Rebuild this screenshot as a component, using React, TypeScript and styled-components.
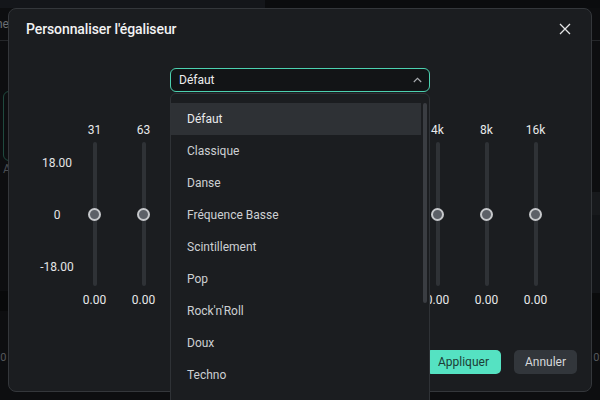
import React from "react";
import styled, { createGlobalStyle } from "styled-components";

const GlobalStyle = createGlobalStyle`
  html, body { margin: 0; padding: 0; background: #0d0e10; }
  body { font-family: Roboto, "Noto Sans", "Liberation Sans", sans-serif; }
  * { box-sizing: border-box; }
`;

const Page = styled.div`
  position: relative;
  width: 600px;
  height: 400px;
  overflow: hidden;
  background: #0d0e10;
  display: grid;
  grid-template-columns: 1fr;
`;

/* ---------- dimmed application behind the dialog ---------- */
const Backdrop = styled.div`
  display: grid;
  grid-template-rows: 8px 33px 50px 70px 130px 20px 89px;
`;
const TopStrip = styled.div`
  display: flex;
`;
const TopStripPart = styled.div<{ $w: number; $bg: string }>`
  width: ${(p) => p.$w}px;
  background: ${(p) => p.$bg};
`;
const TabsRow = styled.div`
  display: flex;
  align-items: center;
  border-bottom: 1px solid #25272a;
  color: #6b6e72;
  font-size: 12px;
  margin-left: -4px;
`;
const GhostCard = styled.div`
  margin-left: 3px;
  width: 60px;
  height: 70px;
  border: 1.5px solid #1f4a3e;
  border-radius: 6px;
`;
const GhostLabel = styled.div`
  margin-left: 3px;
  color: #4a4d52;
  font-size: 12px;
  height: 20px;
  line-height: 16px;
`;
const Spacer = styled.div``;
const DarkBand = styled.div`
  background: #08090a;
`;
const BottomRow = styled.div`
  display: flex;
  justify-content: space-between;
  align-items: flex-start;
  padding-top: 40px;
  color: #55585c;
  font-size: 11px;
  margin-left: -6px;
  margin-right: -2px;
`;
const RightBands = styled.div`
  position: absolute;
  right: 0;
  top: 192px;
  width: 10px;
  display: flex;
  flex-direction: column;
`;
const RightBand = styled.div<{ $h: number; $bg: string }>`
  height: ${(p) => p.$h}px;
  background: ${(p) => p.$bg};
`;

/* ---------- dialog ---------- */
const Dialog = styled.div`
  position: absolute;
  left: 8px;
  top: 8px;
  width: 584px;
  height: 384px;
  background: #1b1d20;
  border: 1px solid #34373b;
  border-radius: 8px;
  display: flex;
  flex-direction: column;
  color: #e6e7e8;
`;
const Header = styled.div`
  display: flex;
  align-items: center;
  justify-content: space-between;
  height: 35px;
  padding: 4px 14px 0 17px;
`;
const Title = styled.h1`
  margin: 0;
  font-size: 14px;
  font-weight: 500;
  color: #f2f2f3;
  letter-spacing: -0.1px;
`;
const CloseButton = styled.button`
  width: 16px;
  height: 16px;
  padding: 0;
  border: 0;
  background: transparent;
  display: flex;
  align-items: center;
  justify-content: center;
  margin-right: 4px;
`;

const SelectArea = styled.div`
  display: flex;
  justify-content: center;
  margin-top: 24px;
`;
const SelectWrap = styled.div`
  position: relative;
  width: 260px;
`;
const SelectBox = styled.div`
  height: 24px;
  border: 1px solid #4cd1b0;
  border-radius: 6px;
  background: #121416;
  display: flex;
  align-items: center;
  justify-content: space-between;
  padding: 0 7px 0 8px;
  font-size: 12px;
  color: #eceded;
`;
const Menu = styled.div`
  position: absolute;
  left: 0;
  top: 25px;
  width: 260px;
  height: 330px;
  background: #1b1d20;
  border: 1px solid #2f3236;
  border-radius: 6px 6px 0 0;
  padding: 9px 8px 0 0;
  z-index: 5;
`;
const MenuItem = styled.div<{ $active?: boolean }>`
  height: 32px;
  display: flex;
  align-items: center;
  padding-left: 16px;
  font-size: 12px;
  color: ${(p) => (p.$active ? "#e9eaeb" : "#cdd0d3")};
  background: ${(p) => (p.$active ? "#2e3135" : "transparent")};
`;
const ScrollThumb = styled.div`
  position: absolute;
  right: 2px;
  top: 9px;
  width: 4px;
  height: 200px;
  border-radius: 2px;
  background: #3a3d42;
`;

const EqRow = styled.div`
  display: flex;
  align-items: flex-start;
  margin-top: 31px;
  padding-left: 35px;
`;
const Axis = styled.div`
  width: 26px;
  height: 144px;
  margin-top: 20px;
  padding: 13px 0;
  display: flex;
  flex-direction: column;
  align-items: center;
  justify-content: space-between;
  font-size: 12px;
  color: #e4e5e6;
`;
const AxisLabel = styled.div`
  height: 14px;
  line-height: 14px;
  white-space: nowrap;
`;
const Band = styled.div`
  width: 49px;
  display: flex;
  flex-direction: column;
  align-items: center;
`;
const BandLabel = styled.div`
  height: 14px;
  line-height: 14px;
  font-size: 12px;
  color: #e8e9ea;
`;
const Track = styled.div`
  margin-top: 5px;
  width: 4px;
  height: 144px;
  border-radius: 2px;
  background: #2f3236;
  display: flex;
  align-items: center;
  justify-content: center;
`;
const Thumb = styled.div`
  flex: none;
  width: 13px;
  height: 13px;
  border-radius: 50%;
  background: #5c6067;
  border: 2px solid #c6c8cb;
`;
const BandValue = styled.div`
  margin-top: 7px;
  height: 14px;
  line-height: 14px;
  font-size: 12px;
  color: #e8e9ea;
`;

const Footer = styled.div`
  margin-top: auto;
  display: flex;
  justify-content: flex-end;
  gap: 13px;
  padding: 0 14px 17px 0;
`;
const Button = styled.button<{ $primary?: boolean }>`
  height: 24px;
  padding: 0 ${(p) => (p.$primary ? 12 : 11)}px;
  border: 0;
  border-radius: 5px;
  font-family: inherit;
  font-size: 12px;
  background: ${(p) => (p.$primary ? "#55e2c2" : "#32363b")};
  color: ${(p) => (p.$primary ? "#1d3c35" : "#d6d8da")};
`;

const bands = ["31", "63", "125", "250", "500", "1k", "2k", "4k", "8k", "16k"];
const presets = [
  "Défaut",
  "Classique",
  "Danse",
  "Fréquence Basse",
  "Scintillement",
  "Pop",
  "Rock'n'Roll",
  "Doux",
  "Techno",
  "Vocal",
];

export default function App() {
  return (
    <>
      <GlobalStyle />
      <Page>
        <Backdrop>
          <TopStrip>
            <TopStripPart $w={265} $bg="#14161a" />
            <TopStripPart $w={335} $bg="#0b0c0e" />
          </TopStrip>
          <TabsRow>he</TabsRow>
          <Spacer />
          <GhostCard />
          <GhostLabel>A</GhostLabel>
          <DarkBand />
          <BottomRow>
            <span>00</span>
            <span>0:</span>
          </BottomRow>
        </Backdrop>
        <RightBands>
          <RightBand $h={23} $bg="#17191c" />
          <RightBand $h={78} $bg="#121417" />
          <RightBand $h={37} $bg="#0a0b0c" />
        </RightBands>

        <Dialog>
          <Header>
            <Title>Personnaliser l'égaliseur</Title>
            <CloseButton aria-label="Fermer">
              <svg width="12" height="12" viewBox="0 0 12 12">
                <path d="M1 1 L11 11 M11 1 L1 11" stroke="#e4e5e6" strokeWidth="1.3" />
              </svg>
            </CloseButton>
          </Header>

          <SelectArea>
            <SelectWrap>
              <SelectBox>
                <span>Défaut</span>
                <svg width="9" height="6" viewBox="0 0 9 6">
                  <path d="M0.8 5 L4.5 1.3 L8.2 5" fill="none" stroke="#a9acb0" strokeWidth="1.1" />
                </svg>
              </SelectBox>
              <Menu>
                {presets.map((p, i) => (
                  <MenuItem key={p} $active={i === 0}>
                    {p}
                  </MenuItem>
                ))}
                <ScrollThumb />
              </Menu>
            </SelectWrap>
          </SelectArea>

          <EqRow>
            <Axis>
              <AxisLabel>18.00</AxisLabel>
              <AxisLabel>0</AxisLabel>
              <AxisLabel>-18.00</AxisLabel>
            </Axis>
            {bands.map((b) => (
              <Band key={b}>
                <BandLabel>{b}</BandLabel>
                <Track>
                  <Thumb />
                </Track>
                <BandValue>0.00</BandValue>
              </Band>
            ))}
          </EqRow>

          <Footer>
            <Button $primary>Appliquer</Button>
            <Button>Annuler</Button>
          </Footer>
        </Dialog>
      </Page>
    </>
  );
}
